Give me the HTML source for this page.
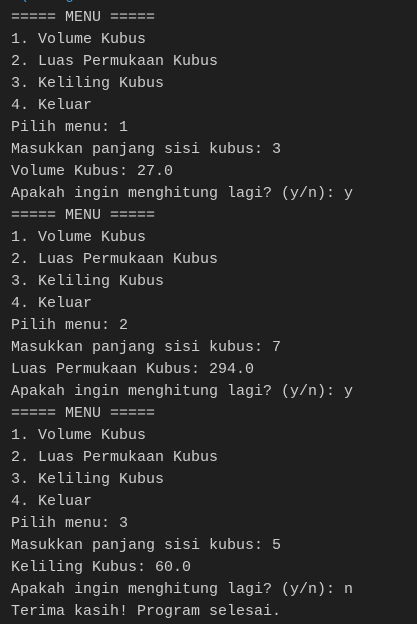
<!DOCTYPE html>
<html><head><style>
html,body{margin:0;padding:0;background:#1f1f1f;width:417px;height:624px;overflow:hidden}
pre{margin:0;position:absolute;left:11px;top:-15px;font-family:"Liberation Mono",monospace;font-size:15px;line-height:22px;color:#cccccc}
.b{color:#3a96dd}
</style></head><body>
<pre><span class="b"> (    g</span>
===== MENU =====
1. Volume Kubus
2. Luas Permukaan Kubus
3. Keliling Kubus
4. Keluar
Pilih menu: 1
Masukkan panjang sisi kubus: 3
Volume Kubus: 27.0
Apakah ingin menghitung lagi? (y/n): y
===== MENU =====
1. Volume Kubus
2. Luas Permukaan Kubus
3. Keliling Kubus
4. Keluar
Pilih menu: 2
Masukkan panjang sisi kubus: 7
Luas Permukaan Kubus: 294.0
Apakah ingin menghitung lagi? (y/n): y
===== MENU =====
1. Volume Kubus
2. Luas Permukaan Kubus
3. Keliling Kubus
4. Keluar
Pilih menu: 3
Masukkan panjang sisi kubus: 5
Keliling Kubus: 60.0
Apakah ingin menghitung lagi? (y/n): n
Terima kasih! Program selesai.</pre>
</body></html>
